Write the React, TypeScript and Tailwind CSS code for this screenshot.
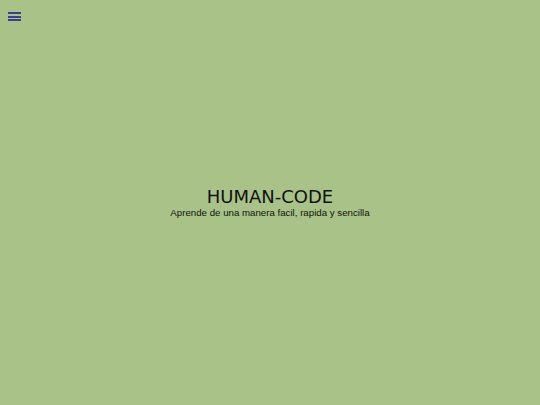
import React from 'react'

const App: React.FC = () => {
  return (
    <div className="relative h-[405px] w-full bg-[#a8c288] font-['DejaVu_Sans',sans-serif] text-black">
      <button className="absolute left-[8px] top-[12px] flex h-[9px] w-[14px] flex-col justify-between">
        <span className="block h-[2px] w-[13px] bg-[#3a3f8f]" />
        <span className="block h-[2px] w-[13px] bg-[#3a3f8f]" />
        <span className="block h-[2px] w-[13px] bg-[#3a3f8f]" />
      </button>
      <div className="flex h-full flex-col items-center justify-center">
        <h1 className="text-[18px] leading-[20px] tracking-[0px] text-[#111]">HUMAN-CODE</h1>
        <p className="font-['Liberation_Sans',sans-serif] text-[9.7px] leading-[12px] text-[#111]">
          Aprende de una manera facil, rapida y sencilla
        </p>
      </div>
    </div>
  )
}

export default App
